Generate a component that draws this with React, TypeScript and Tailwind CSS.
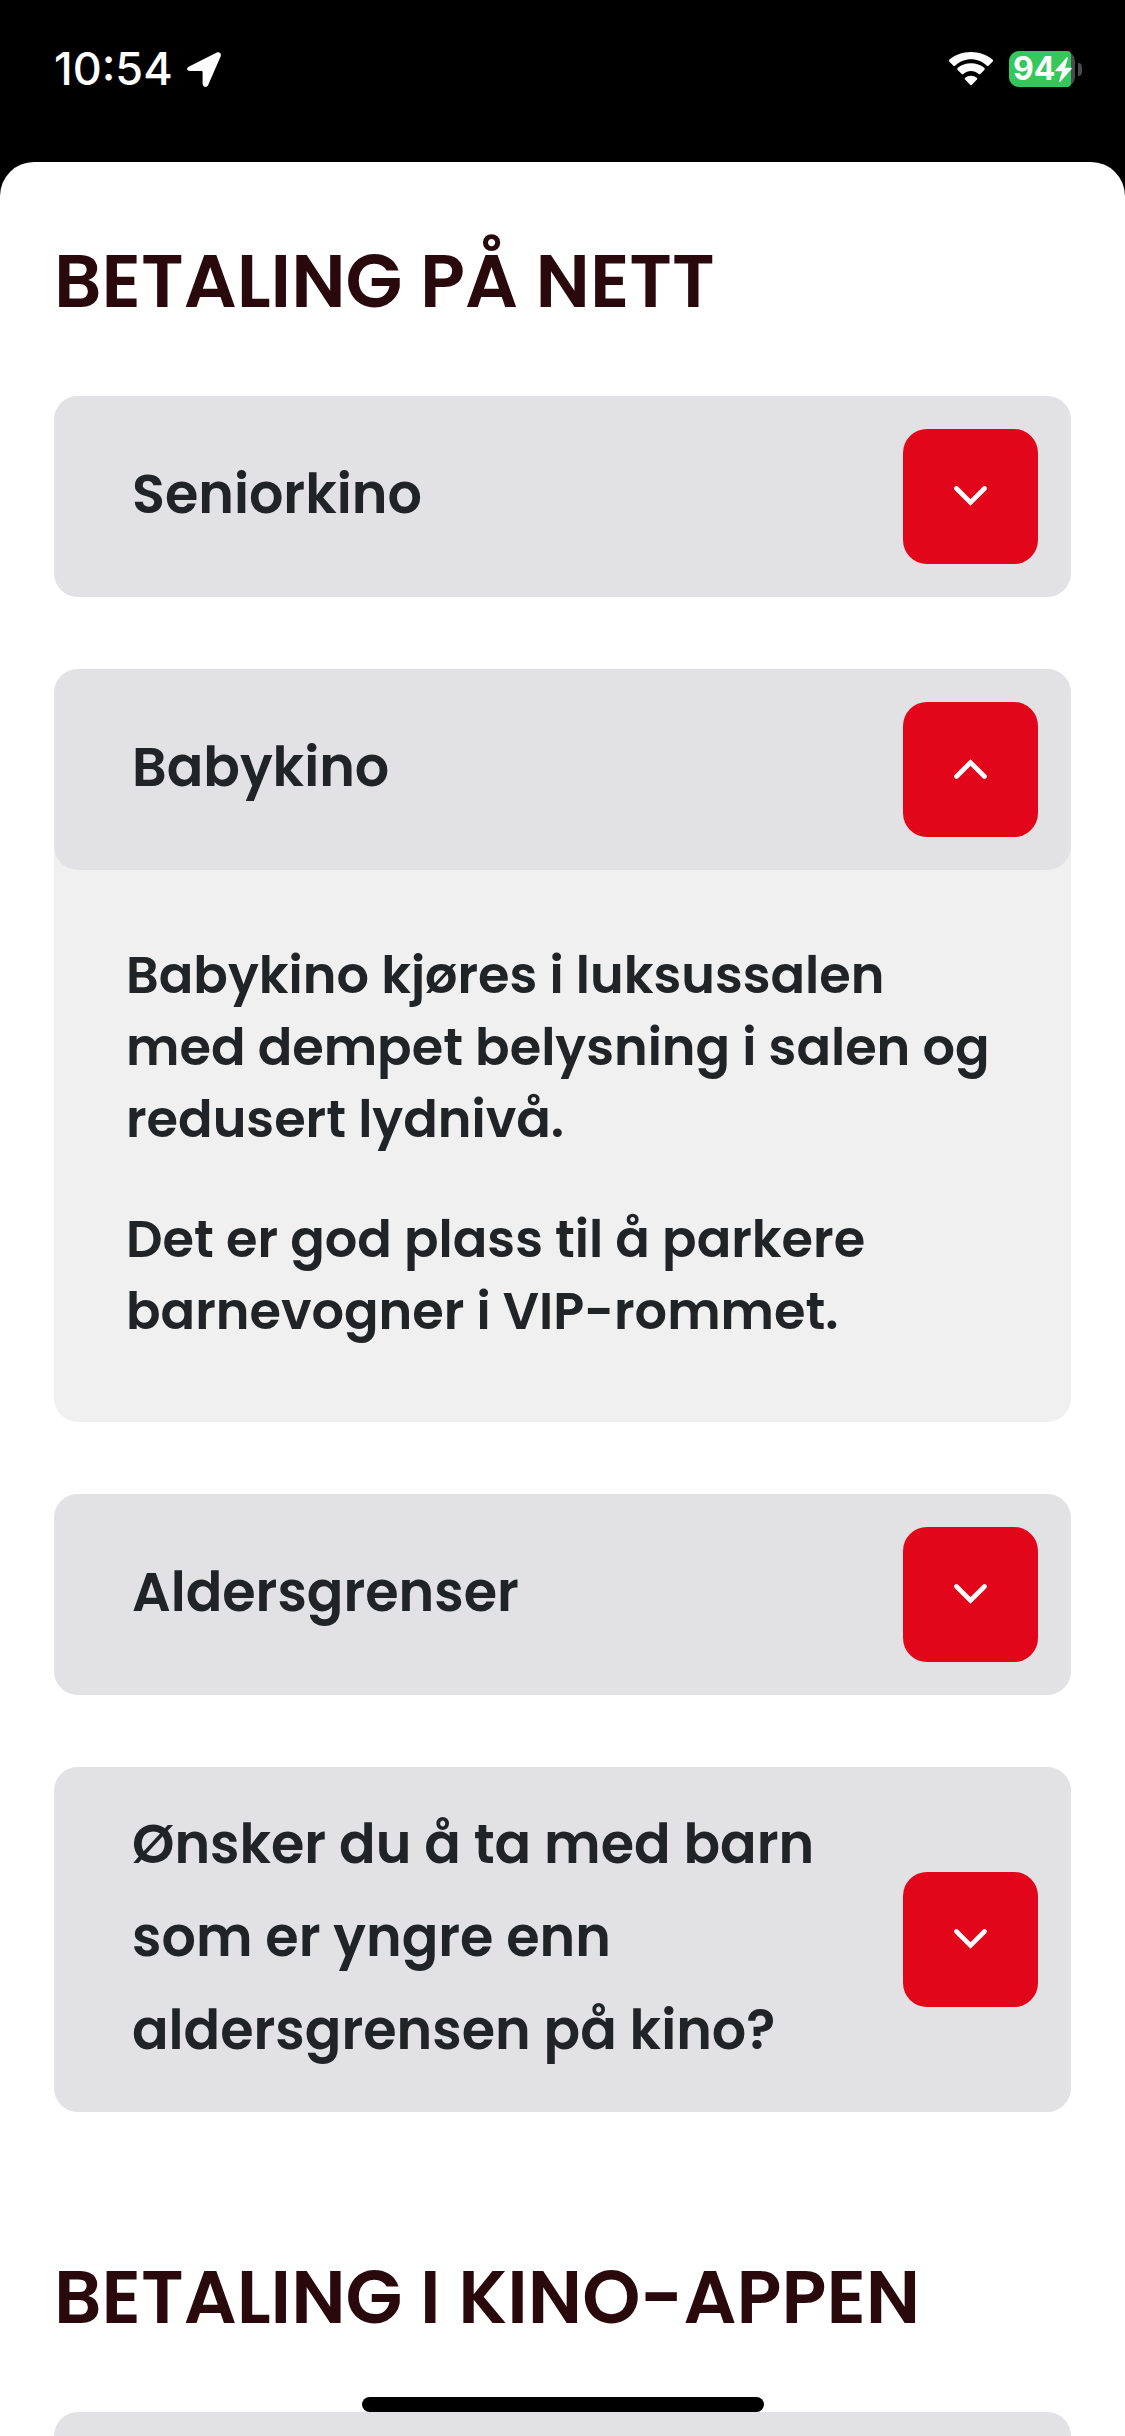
import { useState } from "react";

interface FaqItem {
  id: string;
  question: string;
  answer: string[];
}

const ONLINE_PAYMENT: FaqItem[] = [
  { id: "seniorkino", question: "Seniorkino", answer: [] },
  {
    id: "babykino",
    question: "Babykino",
    answer: [
      "Babykino kjøres i luksussalen med dempet belysning i salen og redusert lydnivå.",
      "Det er god plass til å parkere barnevogner i VIP-rommet.",
    ],
  },
  { id: "aldersgrenser", question: "Aldersgrenser", answer: [] },
  {
    id: "yngre-barn",
    question: "Ønsker du å ta med barn som er yngre enn aldersgrensen på kino?",
    answer: [],
  },
];

const BATTERY_LEVEL = 94;

function LocationIcon() {
  return (
    <svg viewBox="0 0 34 35" className="w-[34px] h-[35px]" fill="currentColor" aria-hidden="true">
      <path d="M2.1 14.6 29.4.7c2.8-1.4 5.4.8 4.2 3.7L21.2 33c-1.3 3-5.6 2.3-5.6-1.2V20.4c0-1-.4-1.4-1.4-1.4H3C-.3 19-1 16.2 2.1 14.6Z" />
    </svg>
  );
}

function WifiIcon() {
  return (
    <svg viewBox="0 0 46 34" className="w-[46px] h-[34px]" fill="currentColor" aria-hidden="true">
      <path d="M23 7.300c6 0 11.600 2.300 15.900 6.400.5.500 1.200.500 1.700 0l3.900-4c.7-.7.700-1.600 0-2.200C38.700 2.700 31.100 0 23 0S7.300 2.700 1.500 7.500c-.7.600-.7 1.500 0 2.200l3.900 4c.5.500 1.200.500 1.700 0C11.400 9.600 17 7.300 23 7.300Z" />
      <path d="M23 19c2.800 0 5.500 1 7.600 2.900.5.500 1.200.4 1.700 0l4-4c.6-.6.6-1.500-.1-2.100-3.600-3-8.200-4.600-13.200-4.600s-9.600 1.600-13.200 4.600c-.7.600-.7 1.500-.1 2.100l4 4c.5.400 1.200.5 1.700 0C17.500 20 20.200 19 23 19Z" />
      <path d="M28.800 25.700c.7.600.6 1.400.1 1.900l-5 5.200c-.5.500-1.300.5-1.800 0l-5-5.200c-.5-.5-.6-1.300.1-1.900 1.600-1.300 3.600-2 5.800-2s4.200.7 5.800 2Z" />
    </svg>
  );
}

function Battery() {
  return (
    <div className="flex items-center gap-[3px]">
      <div className="relative w-[66px] h-9 rounded-[10px] bg-[#4b4b4d]">
        <div
          className="absolute inset-y-0 left-0 rounded-l-[10px] rounded-r-[4px] bg-[#34c759]"
          style={{ width: `${BATTERY_LEVEL}%` }}
        />
        <div className="relative h-full flex items-center pl-1">
          <span className="text-[32px] leading-9 font-bold">{BATTERY_LEVEL}</span>
          <svg viewBox="0 0 17 25" className="w-[17px] h-[25px] shrink-0" fill="currentColor" aria-hidden="true">
            <path d="M11.600.4.6 13c-.6.700-.3 1.300.5 1.300h6L4.200 23.800c-.3 1 .6 1.500 1.300.7L16.500 12c.6-.7.300-1.300-.5-1.300h-6L12.900 1.200c.3-1-.6-1.600-1.300-.8Z" />
          </svg>
        </div>
      </div>
      <div className="w-1 h-[13px] rounded-r-full bg-[#4b4b4d]" />
    </div>
  );
}

function StatusBar() {
  return (
    <header className="h-[162px] shrink-0 flex items-start justify-between pt-[51px] pl-[54px] pr-[43px] font-['Inter',sans-serif] text-white">
      <div className="flex items-center gap-[14px] h-9">
        <span className="text-[45px] leading-9 font-medium">10:54</span>
        <LocationIcon />
      </div>
      <div className="flex items-center gap-[15px] h-9">
        <WifiIcon />
        <Battery />
      </div>
    </header>
  );
}

function Chevron({ up }: { up: boolean }) {
  return (
    <svg viewBox="0 0 33 20" className="w-[33px] h-5" fill="none" stroke="currentColor" strokeWidth="4.6" strokeLinecap="round" aria-hidden="true">
      <path d={up ? "M2.500 17.500 16.500 3.500l14 14" : "M2.500 2.500l14 14 14-14"} />
    </svg>
  );
}

function SectionHeading({ children }: { children: string }) {
  return (
    <h2 className="text-[74px] leading-[84px] font-semibold uppercase text-[#2a090d]">{children}</h2>
  );
}

interface AccordionItemProps {
  item: FaqItem;
  open: boolean;
  onToggle: () => void;
}

function AccordionItem({ item, open, onToggle }: AccordionItemProps) {
  const expanded = open && item.answer.length > 0;

  return (
    <div className="rounded-3xl bg-[#f0f0f0]">
      <button
        type="button"
        aria-expanded={expanded}
        aria-controls={`${item.id}-panel`}
        onClick={onToggle}
        className="w-full min-h-[201px] flex items-center justify-between gap-6 py-[31px] pl-[78px] pr-[33px] rounded-3xl bg-[#e2e2e4] text-left cursor-pointer"
      >
        <span className="pb-1 text-[54px] leading-[93px] font-semibold">{item.question}</span>
        <span className="w-[135px] h-[135px] shrink-0 flex items-center justify-center pb-[2px] rounded-3xl bg-[#e2061a] text-white">
          <Chevron up={expanded} />
        </span>
      </button>
      {expanded && (
        <div id={`${item.id}-panel`} className="flex flex-col gap-12 px-[72px] pt-[69px] pb-[75px]">
          {item.answer.map((paragraph) => (
            <p key={paragraph} className="text-[51px] leading-[72px] font-semibold">
              {paragraph}
            </p>
          ))}
        </div>
      )}
    </div>
  );
}

export default function App() {
  const [openId, setOpenId] = useState<string | null>("babykino");

  return (
    <div className="relative h-screen flex flex-col overflow-hidden bg-black font-['Poppins','Inter',sans-serif] text-[#212427]">
      <StatusBar />

      <main className="flex-1 min-h-0 overflow-y-auto [scrollbar-width:none] rounded-t-[34px] bg-white px-[54px] pt-[77px]">
        <section className="flex flex-col gap-[73px]">
          <SectionHeading>Betaling på nett</SectionHeading>
          <div className="flex flex-col gap-[72px]">
            {ONLINE_PAYMENT.map((item) => (
              <AccordionItem
                key={item.id}
                item={item}
                open={openId === item.id}
                onToggle={() => setOpenId(openId === item.id ? null : item.id)}
              />
            ))}
          </div>
        </section>

        <section className="flex flex-col gap-[73px] pt-[143px]">
          <SectionHeading>Betaling i Kino-appen</SectionHeading>
          <div className="h-[201px] rounded-3xl bg-[#e2e2e4]" />
        </section>
      </main>

      {/* Home indicator */}
      <div className="absolute bottom-6 left-1/2 -translate-x-1/2 w-[402px] h-[15px] rounded-full bg-black" />
    </div>
  );
}
